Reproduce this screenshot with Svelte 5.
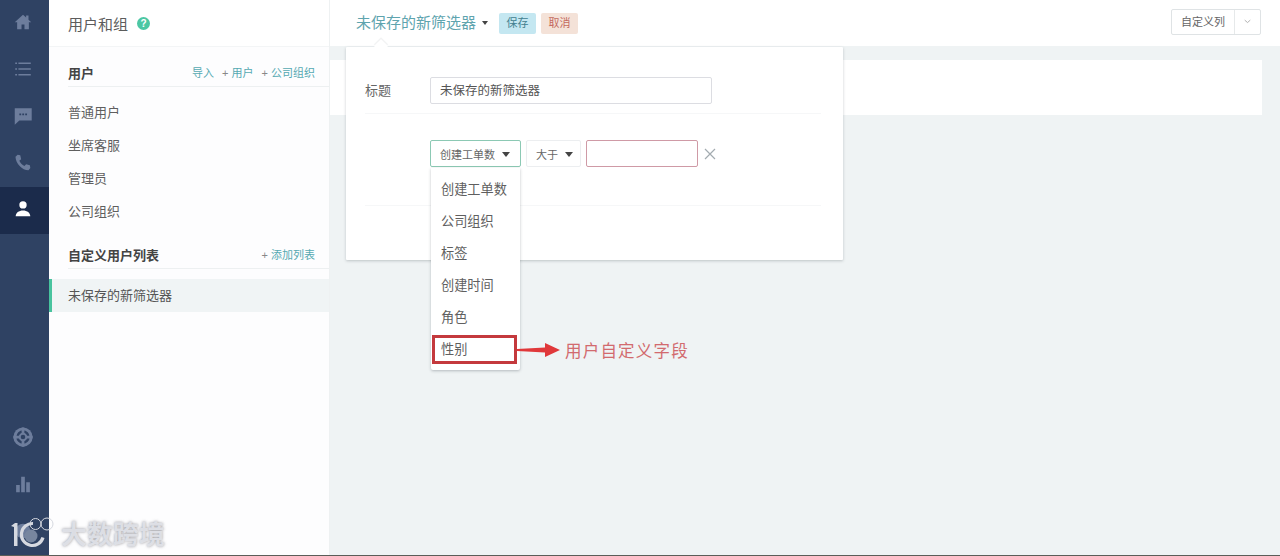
<script>
  const topIcons = [
    { id: 'home', d: 'M12 4 3 12.200h2.600V20h4.800v-5.400h3.200V20h4.800v-7.800H21L18 9.500V5h-2.600v2.200z' },
    { id: 'list', d: 'M3.500 5h2v1.600h-2zM7 5h13.500v1.600H7zM3.500 11.200h2v1.600h-2zM7 11.200h13.500v1.600H7zM3.500 17.400h2V19h-2zM7 17.400h13.500V19H7z' },
    { id: 'chat', d: 'M3 3.500h18.500V17H8l-5 4.500zM8 9.200h2v2H8zM11.200 9.200h2v2h-2zM14.400 9.200h2v2h-2z' },
    { id: 'phone', d: 'M6.200 3 9 3.600l1 4.200-2 1.700c1 2.400 3 4.500 5.600 5.800l1.800-2 4.100 1.200.5 3-2 2.500C11 20 4 12.500 3.800 5.200z' },
    { id: 'user', d: 'M12 3.500a4 4 0 1 1 0 8 4 4 0 0 1 0-8zM4 20c0-4 3.500-6.500 8-6.500s8 2.500 8 6.500z', active: true }
  ];
  const groups = ['普通用户', '坐席客服', '管理员', '公司组织'];
  const options = ['创建工单数', '公司组织', '标签', '创建时间', '角色', '性别'];
</script>

<div class="page">
  <nav class="rail">
    {#each topIcons as icon}
      <div class="rail-item" class:active={icon.active}>
        <svg viewBox="0 0 24 24" width="22" height="22"><path d={icon.d} fill="currentColor" fill-rule="evenodd" /></svg>
      </div>
    {/each}
    <div class="rail-bottom">
      <div class="rail-item">
        <svg viewBox="0 0 24 24" width="22" height="22">
          <circle cx="12" cy="12" r="10.500" fill="currentColor" />
          <circle cx="12" cy="12" r="6" fill="none" stroke="#2f4263" stroke-width="2.600" />
          <path d="M12 1.500v21M1.500 12h21" stroke="currentColor" stroke-width="3" />
          <circle cx="12" cy="12" r="2.500" fill="#2f4263" />
        </svg>
      </div>
      <div class="rail-item">
        <svg viewBox="0 0 24 24" width="22" height="22"><path d="M4.500 13h4v8h-4zM10 4h4v17h-4zM15.500 10h4v11h-4z" fill="currentColor" /></svg>
      </div>
      <div class="rail-item">
        <svg viewBox="0 0 24 24" width="22" height="22"><circle cx="12" cy="12" r="8" fill="currentColor" /></svg>
      </div>
    </div>
  </nav>

  <aside class="panel">
    <header class="panel-head">
      <span>用户和组</span>
      <span class="help">?</span>
    </header>

    <div class="section-head first">
      <strong>用户</strong>
      <div class="links"><span>导入</span><span><i>+</i> 用户</span><span><i>+</i> 公司组织</span></div>
    </div>
    <ul class="group-list">
      {#each groups as g}<li>{g}</li>{/each}
    </ul>

    <div class="section-head second">
      <strong>自定义用户列表</strong>
      <div class="links"><span><i>+</i> 添加列表</span></div>
    </div>
    <div class="selected">未保存的新筛选器</div>
  </aside>

  <main class="main">
    <div class="topbar">
      <div class="title-wrap">
        <span class="view-title">未保存的新筛选器</span>
        <span class="caret small"></span>
        <span class="tag save">保存</span>
        <span class="tag cancel">取消</span>
      </div>
      <div class="columns-btn">
        <span class="columns-label">自定义列</span>
        <span class="columns-arrow">
          <svg viewBox="0 0 10 6" width="7" height="5"><path d="M1 1l4 3.500L9 1" fill="none" stroke="#aaa" stroke-width="1.300" /></svg>
        </span>
      </div>
    </div>
    <div class="content">
      <div class="card"></div>
    </div>

    <div class="popover">
      <span class="pointer"></span>
      <div class="form-row title-row">
        <span class="form-label">标题</span>
        <div class="title-input">未保存的新筛选器</div>
      </div>
      <div class="form-row cond-row">
        <div class="select field">创建工单数 <span class="caret"></span></div>
        <div class="select op">大于 <span class="caret"></span></div>
        <div class="value-input"></div>
        <svg class="remove" viewBox="0 0 12 12" width="12" height="12"><path d="M1 1l10 10M11 1 1 11" stroke="#a3abb0" stroke-width="1.200" fill="none" /></svg>
      </div>
      <div class="footer-rule"></div>

      <ul class="menu">
        {#each options as o, i}
          <li class:marked={i === options.length - 1}>{o}</li>
        {/each}
      </ul>
    </div>

    <div class="annotation">
      <svg viewBox="0 0 43 16" width="43" height="16"><path d="M0 7 28 5.500V1L43 8 28 15v-4.500L0 9z" fill="#e0383a" /></svg>
      <span>用户自定义字段</span>
    </div>
  </main>

  <div class="watermark">
    <svg class="wm-logo" viewBox="0 0 48 32" width="48" height="32">
      <path d="M1 7 5 4h2.500v23H4V8z" fill="#d6d9e0" />
      <circle cx="21" cy="17" r="6.500" fill="#77869f" />
      <path d="M23 4.500a11 11 0 1 0 10 14" fill="none" stroke="#d6d9e0" stroke-width="3.200" />
      <circle cx="25.500" cy="5" r="5.500" fill="none" stroke="#d6d9e0" stroke-width="1" />
      <circle cx="37" cy="5" r="6" fill="none" stroke="#d6d9e0" stroke-width="1" />
    </svg>
    <span class="wm-text">大数跨境</span>
  </div>
</div>

<style>
  :global(body) {
    margin: 0;
    background: #fff;
    font-family: "Liberation Sans", "Noto Sans CJK SC", sans-serif;
  }
  ul { list-style: none; margin: 0; padding: 0; }
  .page {
    position: relative;
    display: flex;
    width: 1280px;
    height: 556px;
    box-sizing: border-box;
    border-bottom: 1px solid #5b5d58;
    overflow: hidden;
    color: #555;
    font-size: 13px;
  }
  .rail {
    width: 49px;
    flex: none;
    display: flex;
    flex-direction: column;
    background: #2f4263;
    color: #6d7d9c;
  }
  .rail-item {
    height: 46.750px;
    display: flex;
    align-items: center;
    justify-content: center;
    padding-right: 3px;
    box-sizing: border-box;
  }
  .rail-item svg { margin-top: -2px; }
  .rail-item.active { background: #1b2b4b; color: #fff; }
  .rail-bottom { margin-top: auto; margin-bottom: 0; }
  .panel {
    width: 281px;
    flex: none;
    background: #fdfdfe;
    border-right: 1px solid #eef1f2;
    box-sizing: border-box;
  }
  .panel-head {
    height: 47px;
    display: flex;
    align-items: center;
    gap: 9px;
    padding-left: 19px;
    font-size: 15px;
    color: #5c5c5c;
    background: #fff;
    border-bottom: 1px solid #f3f5f6;
    box-sizing: border-box;
  }
  .help {
    width: 13px;
    height: 13px;
    border-radius: 50%;
    background: #4cc7a4;
    color: #fff;
    font-size: 10px;
    line-height: 13px;
    text-align: center;
    font-weight: 700;
  }
  .section-head {
    display: flex;
    justify-content: space-between;
    align-items: center;
    height: 27px;
    margin-left: 19px;
    padding-right: 14px;
    border-bottom: 1px solid #edf0f1;
  }
  .section-head.first { margin-top: 12px; }
  .section-head.second { margin-top: 13px; }
  .section-head strong { font-size: 13px; color: #444; font-weight: 700; }
  .links { display: flex; gap: 8px; font-size: 11px; color: #55a9b2; position: relative; top: -1px; }
  .links i { font-style: normal; color: #888; }
  .group-list { padding-top: 9px; }
  .group-list li {
    height: 33px;
    line-height: 33px;
    padding-left: 19px;
    color: #5f5f5f;
    font-size: 13px;
  }
  .selected {
    margin-top: 10px;
    height: 33px;
    line-height: 33px;
    padding-left: 16px;
    border-left: 3px solid #48c39e;
    background: #f0f4f5;
    font-size: 13px;
    color: #555;
  }
  .main {
    flex: 1;
    min-width: 0;
    display: flex;
    flex-direction: column;
    position: relative;
  }
  .topbar {
    height: 46px;
    flex: none;
    background: #fff;
    display: flex;
    align-items: center;
    justify-content: space-between;
    padding: 0 19px 0 26px;
  }
  .title-wrap { display: flex; align-items: center; }
  .view-title { font-size: 15px; color: #5ea4ae; margin-bottom: 3px; }
  .caret {
    display: inline-block;
    width: 0;
    height: 0;
    border: 4px solid transparent;
    border-top: 5px solid #444;
    border-bottom: 0;
    margin-left: 4px;
    vertical-align: 2px;
  }
  .caret.small { border-width: 3px; border-top-width: 4px; border-bottom: 0; margin: 0 11px 0 6px; }
  .tag {
    height: 21px;
    line-height: 21px;
    padding: 0 7.500px;
    font-size: 11px;
    border-radius: 2px;
    margin-right: 5px;
  }
  .tag.save { background: #c4e7f1; color: #42808f; }
  .tag.cancel { background: #f4e2d8; color: #c46a5f; }
  .columns-btn {
    display: flex;
    height: 24px;
    border: 1px solid #dfe3e5;
    border-radius: 2px;
    font-size: 11px;
    color: #666;
    margin-top: -3px;
    background: #fff;
  }
  .columns-label { width: 62px; line-height: 25px; text-align: center; }
  .columns-arrow {
    width: 25px;
    border-left: 1px solid #e6e9ea;
    display: flex;
    align-items: center;
    justify-content: center;
  }
  .content {
    flex: 1;
    background: #eff3f4;
    padding: 14px 18px 0 0;
  }
  .card { height: 55px; background: #fff; }
  .popover {
    position: absolute;
    left: 16px;
    top: 47px;
    width: 497px;
    height: 213px;
    background: #fff;
    box-shadow: 0 1px 3px rgba(40, 50, 60, 0.25);
    box-sizing: border-box;
    padding: 30px 22px 0 19px;
    border-radius: 1px;
  }
  .pointer {
    position: absolute;
    left: 30px;
    top: -6px;
    width: 10px;
    height: 10px;
    background: #fff;
    transform: rotate(45deg);
    box-shadow: -1px -1px 1px rgba(40, 50, 60, 0.08);
  }
  .form-row { display: flex; align-items: center; }
  .title-row {
    height: 27px;
    padding-bottom: 9px;
    border-bottom: 1px solid #f6f7f8;
  }
  .form-label { width: 65px; font-size: 13px; color: #666; margin-bottom: 2px; }
  .title-input {
    width: 282px;
    height: 27px;
    line-height: 26px;
    border: 1px solid #dcdde2;
    border-radius: 2px;
    padding-left: 9px;
    box-sizing: border-box;
    font-size: 12.500px;
    color: #555;
  }
  .cond-row { margin: 26px 0 0 65px; height: 27px; gap: 5px; }
  .select {
    height: 27.500px;
    line-height: 29px;
    border-radius: 2px;
    box-sizing: border-box;
    font-size: 11px;
    color: #666;
    white-space: nowrap;
  }
  .select.field { width: 91px; border: 1px solid #8cc9b4; padding-left: 9px; }
  .select.op { width: 55px; border: 1px solid #eceef0; padding-left: 9px; }
  .value-input {
    width: 112px;
    height: 27.500px;
    border: 1px solid #cf9aa6;
    border-radius: 2px;
    box-sizing: border-box;
  }
  .remove { margin-left: 1px; }
  .footer-rule {
    height: 15px;
    border-top: 1px solid #f6f7f8;
    margin-top: 38px;
  }
  .menu {
    position: absolute;
    left: 85px;
    top: 121px;
    width: 89px;
    height: 202px;
    padding-top: 6px;
    box-sizing: border-box;
    background: #fff;
    box-shadow: 0 1px 3px rgba(40, 50, 60, 0.3);
    border-radius: 0 0 2px 2px;
  }
  .menu li {
    height: 32px;
    line-height: 32px;
    padding-left: 10px;
    font-size: 13.200px;
    color: #5f5f5f;
    box-sizing: border-box;
  }
  .menu li.marked {
    margin: 1px 0 0 1px;
    padding-left: 6px;
    width: 85px;
    line-height: 24px;
    height: 29px;
    border: 3px solid #c4393d;
  }
  .annotation {
    position: absolute;
    left: 187px;
    top: 338px;
    display: flex;
    align-items: center;
    gap: 5px;
    color: #d26a6e;
    font-size: 16.500px;
    letter-spacing: 1.200px;
  }
  .watermark {
    position: absolute;
    left: 10px;
    bottom: 4px;
    display: flex;
    align-items: center;
    gap: 3px;
    color: rgba(224, 226, 232, 0.95);
    text-shadow: 0 0 3px rgba(90, 90, 100, 0.6);
  }
  .wm-logo { overflow: visible; }
  .wm-text { font-size: 26px; line-height: 30px; font-weight: 700; }
</style>
